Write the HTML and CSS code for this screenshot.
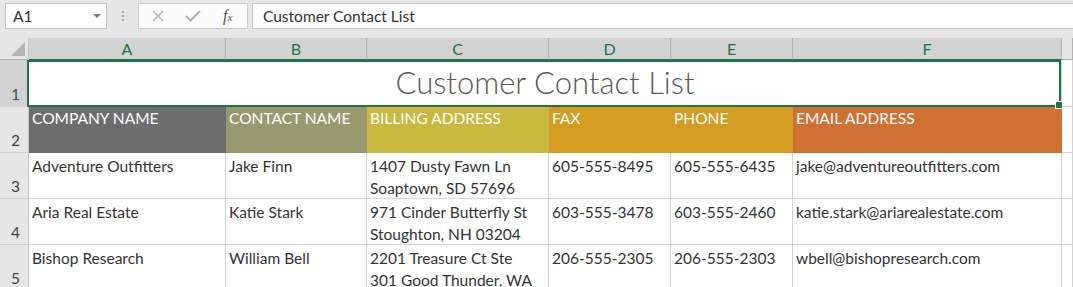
FILE: index.html
```html
<!DOCTYPE html>
<html lang="en">
<head>
    <meta charset="UTF-8">
    <meta name="viewport" content="width=device-width, initial-scale=1.0">
    <title>Customer Contact List</title>
    <link rel="stylesheet" href="styles.css">
</head>
<body>
    <div class="formula-bar">
        <div class="name-box">
            <span>A1</span>
            <svg class="caret" width="8" height="4" viewBox="0 0 8 4"><path d="M0 0h8L4 4z" fill="#7a7a7a"/></svg>
        </div>
        <svg class="grip" width="3" height="11" viewBox="0 0 3 11">
            <rect x="0" y="0" width="2" height="2" fill="#a8a8a8"/>
            <rect x="0" y="4" width="2" height="2" fill="#a8a8a8"/>
            <rect x="0" y="8" width="2" height="2" fill="#a8a8a8"/>
        </svg>
        <div class="fx-buttons">
            <svg class="cancel" width="12" height="12" viewBox="0 0 12 12"><path d="M1 1l10 10M11 1L1 11" stroke="#b3b3b3" stroke-width="1.4" fill="none"/></svg>
            <svg class="enter" width="16" height="12" viewBox="0 0 16 12"><path d="M1 6l4.5 4.5L15 1" stroke="#b3b3b3" stroke-width="2" fill="none"/></svg>
            <span class="fx">f<span class="fx-x">x</span></span>
        </div>
        <div class="formula">Customer Contact List</div>
    </div>

    <div class="sheet">
        <!-- column headings -->
        <div class="corner"><div class="corner-mark"></div></div>
        <div class="col-head sel">A</div>
        <div class="col-head sel">B</div>
        <div class="col-head sel">C</div>
        <div class="col-head sel">D</div>
        <div class="col-head sel">E</div>
        <div class="col-head sel">F</div>
        <div class="col-head"></div>

        <!-- row 1 -->
        <div class="row-head sel">1</div>
        <div class="cell title">Customer Contact List</div>
        <div class="cell"></div>

        <!-- row 2 -->
        <div class="row-head">2</div>
        <div class="cell head h-company">COMPANY NAME</div>
        <div class="cell head h-contact">CONTACT NAME</div>
        <div class="cell head h-billing">BILLING ADDRESS</div>
        <div class="cell head h-fax">FAX</div>
        <div class="cell head h-phone">PHONE</div>
        <div class="cell head h-email">EMAIL ADDRESS</div>
        <div class="cell"></div>

        <!-- row 3 -->
        <div class="row-head">3</div>
        <div class="cell">Adventure Outfitters</div>
        <div class="cell">Jake Finn</div>
        <div class="cell">1407 Dusty Fawn Ln<br>Soaptown, SD 57696</div>
        <div class="cell">605-555-8495</div>
        <div class="cell">605-555-6435</div>
        <div class="cell">jake@adventureoutfitters.com</div>
        <div class="cell"></div>

        <!-- row 4 -->
        <div class="row-head">4</div>
        <div class="cell">Aria Real Estate</div>
        <div class="cell">Katie Stark</div>
        <div class="cell">971 Cinder Butterfly St<br>Stoughton, NH 03204</div>
        <div class="cell">603-555-3478</div>
        <div class="cell">603-555-2460</div>
        <div class="cell">katie.stark@ariarealestate.com</div>
        <div class="cell"></div>

        <!-- row 5 -->
        <div class="row-head">5</div>
        <div class="cell">Bishop Research</div>
        <div class="cell">William Bell</div>
        <div class="cell">2201 Treasure Ct Ste<br>301 Good Thunder, WA</div>
        <div class="cell">206-555-2305</div>
        <div class="cell">206-555-2303</div>
        <div class="cell">wbell@bishopresearch.com</div>
        <div class="cell"></div>
    </div>
</body>
</html>
```

FILE: styles.css
```css
*
{
    box-sizing: border-box;
}
body
{
    margin: 0;
    background-color: #fff;
    font-family: Lato, "Open Sans", sans-serif;
    color: #333;
    overflow: hidden;
}

/* formula bar */
.formula-bar
{
    display: flex;
    align-items: center;
    height: 38px;
    padding: 3px 0 9px 5px;
    background-color: #e6e6e6;
}
.name-box
{
    display: flex;
    align-items: center;
    justify-content: space-between;
    width: 102px;
    height: 26px;
    padding: 0 5px 0 7px;
    background-color: #fff;
    border: 1px solid #c6c6c6;
    font-size: 15.5px;
}
.grip
{
    margin-left: 15px;
}
.fx-buttons
{
    display: flex;
    align-items: center;
    width: 110px;
    height: 26px;
    margin-left: 13px;
    background-color: #fbfbfb;
    border: 1px solid #cfcfcf;
}
.cancel
{
    margin-left: 13px;
}
.enter
{
    margin-left: 21px;
}
.fx
{
    margin-left: 22px;
    font-family: "Liberation Serif", serif;
    font-style: italic;
    font-size: 16px;
    color: #555;
}
.fx-x
{
    font-size: 11px;
}
.formula
{
    flex: 1;
    display: flex;
    align-items: center;
    height: 26px;
    margin-left: 4px;
    margin-right: -2px;
    padding-left: 10px;
    background-color: #fff;
    border: 1px solid #c6c6c6;
    font-size: 15.5px;
}

/* sheet grid */
.sheet
{
    display: grid;
    grid-template-columns: 29px 197px 141px 182px 122px 122px 269px 1fr;
    grid-template-rows: 22px 47px 46px 46px 46px 46px;
    font-size: 15.5px;
}
.corner
{
    display: flex;
    justify-content: flex-end;
    align-items: flex-end;
    padding: 0 3px 3px 0;
    background-color: #e6e6e6;
    border-right: 1px solid #c6c6c6;
    border-bottom: 1px solid #b1b1b1;
}
.corner-mark
{
    width: 14px;
    height: 14px;
    background-color: #b5b5b5;
    clip-path: polygon(100% 0, 100% 100%, 0 100%);
}
.col-head
{
    display: flex;
    align-items: center;
    justify-content: center;
    background-color: #e6e6e6;
    border-right: 1px solid #b1b1b1;
    border-bottom: 1px solid #ababab;
    font-size: 16px;
    color: #444;
}
.col-head.sel
{
    background-color: #d2d2d2;
    color: #217346;
    border-bottom-color: #217346;
}
.row-head
{
    display: flex;
    align-items: flex-end;
    padding: 0 0 3px 11px;
    background-color: #e6e6e6;
    border-right: 1px solid #c6c6c6;
    border-bottom: 1px solid #cfcfcf;
    color: #444;
    line-height: 18px;
}
.row-head.sel
{
    background-color: #d2d2d2;
    color: #35584a;
}
.cell
{
    padding: 2px 3px 0 3px;
    border-right: 1px solid #d4d4d4;
    border-bottom: 1px solid #d4d4d4;
    line-height: 22px;
    white-space: nowrap;
    overflow: hidden;
}

/* merged title cell with selection frame */
.title
{
    grid-column: span 6;
    position: relative;
    display: flex;
    align-items: flex-end;
    justify-content: center;
    padding: 0 0 6px 0;
    overflow: visible;
    font-weight: 300;
    font-size: 31px;
    line-height: 36px;
    color: #5a5a5a;
}
.title::after
{
    content: "";
    position: absolute;
    top: 0;
    left: -2px;
    right: 0;
    bottom: -1px;
    border: 2px solid #217346;
}
.title::before
{
    content: "";
    position: absolute;
    right: -2px;
    bottom: -3px;
    width: 6px;
    height: 6px;
    background-color: #217346;
    border: 1px solid #fff;
    z-index: 1;
}

/* coloured headings of row 2 */
.head
{
    padding-top: 0;
    color: #fdfdfd;
}
.h-company
{
    background-color: #6d6d6d;
    border-color: #6d6d6d;
}
.h-contact
{
    background-color: #99996f;
    border-color: #99996f;
}
.h-billing
{
    background-color: #c9b93f;
    border-color: #c9b93f;
}
.h-fax,
.h-phone
{
    background-color: #d49d22;
    border-color: #d49d22;
}
.h-email
{
    background-color: #d07134;
    border-color: #d07134;
}
```
